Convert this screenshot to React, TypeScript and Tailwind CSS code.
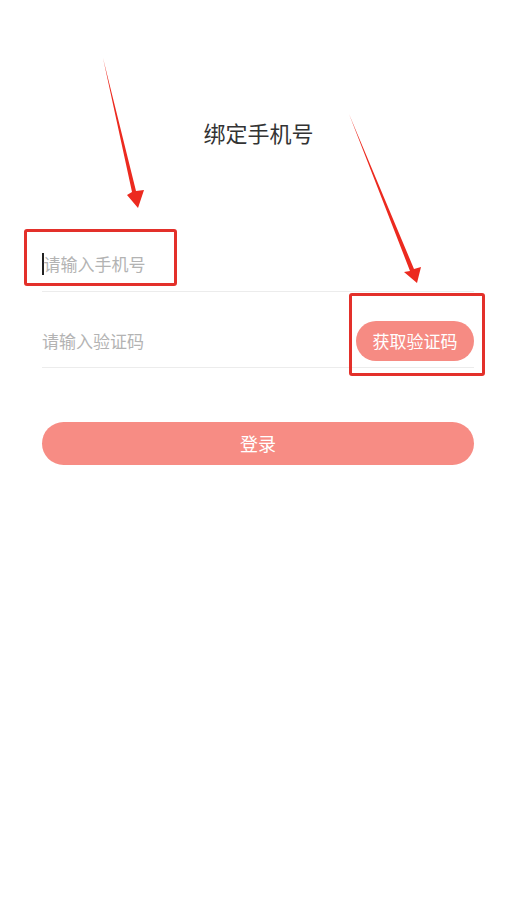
const font = { fontFamily: '"Noto Sans CJK SC", "Noto Sans", sans-serif' };

const Arrows = () => (
  <svg className="pointer-events-none absolute left-0 top-0" width="517" height="901" viewBox="0 0 517 901">
    <polygon points="103,58 136,191 144,190 138,208 127,195 132,192" fill="#ec2a1f" />
    <polygon points="349,114 414,269 421,267 417,283 404,272 410,271" fill="#ec2a1f" />
  </svg>
);

const App = () => {
  return (
    <div className="relative min-h-[901px] w-[517px] bg-white" style={font}>
      <div className="px-[42px] pt-[117px]">
        <h1 className="text-center text-[22px] leading-[30px] text-[#333]">绑定手机号</h1>

        <div className="mt-[90px] flex h-[55px] w-[432px] items-center border-b border-[#ececec]">
          <span className="h-[22px] w-[1.5px] bg-[#222]" />
          <span className="text-[17px] text-[#b3b3b3]">请输入手机号</span>
        </div>

        <div className="flex w-[432px] items-center justify-between border-b border-[#ececec] pb-[6px] pt-[29px]">
          <span className="text-[17px] text-[#b3b3b3]">请输入验证码</span>
          <button className="flex h-[40px] w-[118px] items-center justify-center rounded-full bg-[#f68b83] text-[17px] text-white">
            获取验证码
          </button>
        </div>

        <button className="mt-[54px] flex h-[43px] w-[432px] items-center justify-center rounded-full bg-[#f78c84] text-[18px] text-white">
          登录
        </button>
      </div>

      {/* annotation boxes */}
      <div className="pointer-events-none absolute left-[24px] top-[229px] h-[57px] w-[153px] rounded-[3px] border-[3px] border-[#e3302a]" />
      <div className="pointer-events-none absolute left-[349px] top-[293px] h-[83px] w-[136px] rounded-[3px] border-[3px] border-[#e3302a]" />
      <Arrows />
    </div>
  );
};

export default App;
